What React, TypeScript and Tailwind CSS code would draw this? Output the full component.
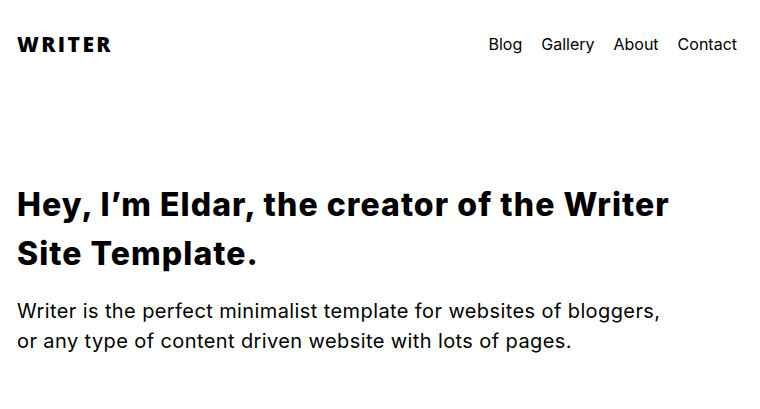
import React from "react";

const navLinks = ["Blog", "Gallery", "About", "Contact"];

export default function App() {
  return (
    <div className="min-h-screen bg-white text-black" style={{ fontFamily: "Inter, 'Noto Sans', sans-serif" }}>
      <header className="flex items-center justify-between pl-[17px] pr-[23px] pt-[30px] h-[58px]">
        <a
          href="#"
          className="text-[21px] font-extrabold tracking-[0.115em] leading-none"
          style={{ fontFamily: "'Open Sans', sans-serif" }}
        >
          WRITER
        </a>
        <nav className="flex items-center gap-[19px] text-[16px]">
          {navLinks.map((link) => (
            <a key={link} href="#" className="leading-none">
              {link}
            </a>
          ))}
        </nav>
      </header>

      <main className="px-[17px] pt-[122px]">
        <h1 className="max-w-[690px] text-[32px] font-extrabold tracking-[0.033em] leading-[49px]">
          Hey, I’m Eldar, the creator of the Writer Site Template.
        </h1>
        <p className="mt-[18px] max-w-[668px] text-[20px] tracking-[0.02em] leading-[30px]">
          Writer is the perfect minimalist template for websites of bloggers,
          or any type of content driven website with lots of pages.
        </p>
      </main>
    </div>
  );
}
